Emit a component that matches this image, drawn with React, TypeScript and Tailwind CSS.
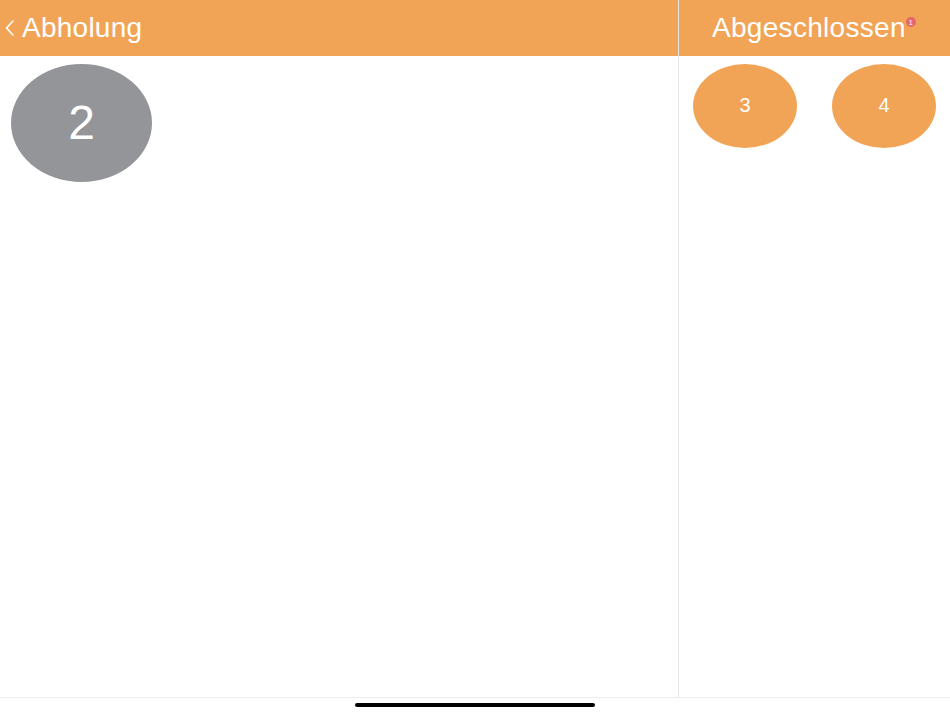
export default function App() {
  return (
    <div
      className="flex h-[712px] w-[950px] flex-col bg-white"
      style={{ fontFamily: '"Liberation Sans", Arial, sans-serif' }}
    >
      <div className="flex min-h-0 flex-1">
        <section className="flex w-[679px] flex-col border-r border-[#e6e6e6]">
          <header className="flex h-[56px] items-center bg-[#f2a456] text-white">
            <svg width="11" height="18" viewBox="0 0 11 18" className="ml-[4px] mr-[7px]">
              <path d="M9 2 L2.5 9 L9 16" fill="none" stroke="white" strokeWidth="1.6" strokeLinecap="round" strokeLinejoin="round" />
            </svg>
            <span className="text-[28px] leading-none tracking-[0.25px]">Abholung</span>
          </header>
          <div className="flex-1 p-[8px_11px]">
            <div className="flex h-[118px] w-[141px] items-center justify-center rounded-[50%] bg-[#939598] text-[48px] text-white">
              2
            </div>
          </div>
        </section>
        <section className="flex flex-1 flex-col">
          <header className="flex h-[56px] items-center bg-[#f2a456] pl-[33px] text-white">
            <span className="relative text-[28px] leading-none tracking-[0.3px]">
              Abgeschlossen
              <span className="absolute right-[-10px] top-[3px] flex h-[10px] w-[10px] items-center justify-center rounded-full bg-[#e2676e] text-[7px] leading-none tracking-normal text-white">
                1
              </span>
            </span>
          </header>
          <div className="flex flex-1 items-start gap-[35px] pl-[14px] pt-[8px]">
            <div className="flex h-[84px] w-[104px] items-center justify-center rounded-[50%] bg-[#f2a456] pb-[2px] text-[20px] text-white">
              3
            </div>
            <div className="flex h-[84px] w-[104px] items-center justify-center rounded-[50%] bg-[#f2a456] pb-[2px] text-[20px] text-white">
              4
            </div>
          </div>
        </section>
      </div>
      <footer className="flex h-[15px] justify-center border-t border-[#ececec] pt-[5px]">
        <div className="h-[4px] w-[240px] rounded-full bg-black" />
      </footer>
    </div>
  );
}
